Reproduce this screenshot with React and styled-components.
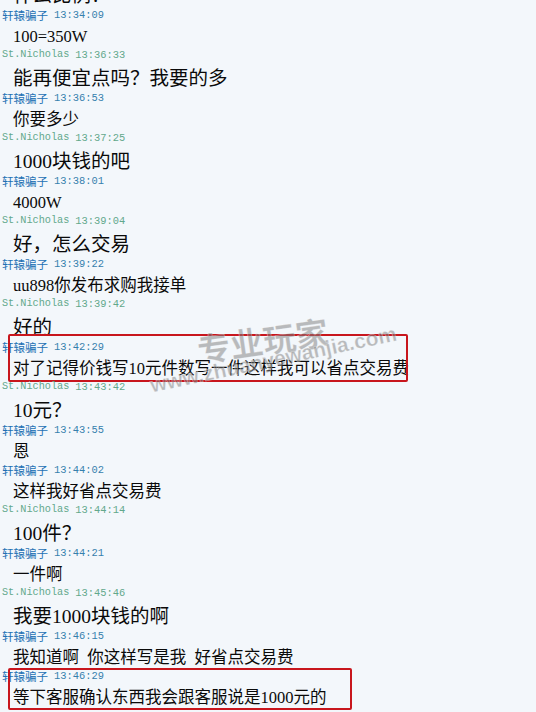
import React from "react"
import styled, { createGlobalStyle } from "styled-components"

const GlobalStyle = createGlobalStyle`
  html, body {
    margin: 0;
    padding: 0;
    background: #f3f7fb;
    overflow: hidden;
  }
`;

const Screen = styled.div`
  position: relative;
  width: 536px;
  height: 712px;
  overflow: hidden;
  background: #f3f7fb;
`;

const Log = styled.div`
  display: flex;
  flex-direction: column;
  margin-top: -36px;
`;

const Entry = styled.div`
  position: relative;
  display: flex;
  flex-direction: column;

  ${({ $box }) => $box && `
    &::after {
      content: "";
      position: absolute;
      left: 8px;
      top: ${$box.top}px;
      width: ${$box.width}px;
      height: ${$box.height}px;
      box-sizing: border-box;
      border: 2px solid #c8161d;
      border-radius: 2px;
      pointer-events: none;
    }
  `}
`;

const Header = styled.div`
  display: flex;
  align-items: center;
  gap: 6px;
  height: 16px;
  padding-left: 2px;
  white-space: nowrap;
`;

const Name = styled.span`
  font-family: ${({ $cjk }) => $cjk ? '"Noto Sans CJK SC", sans-serif' : '"Liberation Mono", monospace'};
  font-size: ${({ $cjk }) => $cjk ? "11.5px" : "10.2px"};
  line-height: 16px;
  color: ${({ $color }) => $color};
`;

const Time = styled.span`
  font-family: "Liberation Mono", monospace;
  font-size: 10.4px;
  line-height: 16px;
  color: ${({ $color }) => $color};
`;

const Body = styled.div`
  padding: 4px 0 0 13px;
  font-family: "Liberation Serif", "Noto Sans CJK SC", serif;
  font-size: ${({ $big }) => $big ? "19.5px" : "16.5px"};
  line-height: ${({ $big }) => $big ? "23px" : "20px"};
  color: #0a0a0a;
  white-space: pre;
`;

const Watermark = styled.div`
  position: absolute;
  left: ${({ $x }) => $x}px;
  top: ${({ $y }) => $y}px;
  transform: rotate(${({ $rot }) => $rot}deg);
  transform-origin: left top;
  font-family: ${({ $cjk }) => $cjk ? '"Noto Sans CJK SC", sans-serif' : '"Liberation Sans", sans-serif'};
  font-size: ${({ $size }) => $size}px;
  font-weight: 700;
  color: rgba(125, 125, 125, 0.5);
  -webkit-text-stroke: 0.6px rgba(255, 255, 255, 0.45);
  white-space: nowrap;
  pointer-events: none;
`;

const people = {
  xuan: { name: "轩辕骗子", cjk: true, nameColor: "#1f72b4", timeColor: "#3680ad", big: false },
  nick: { name: "St.Nicholas", cjk: false, nameColor: "#62a88b", timeColor: "#62a88b", big: true },
};

const messages = [
  { who: "nick", time: "13:33:51", text: "什么比例？" },
  { who: "xuan", time: "13:34:09", text: "100=350W" },
  { who: "nick", time: "13:36:33", text: "能再便宜点吗？我要的多" },
  { who: "xuan", time: "13:36:53", text: "你要多少" },
  { who: "nick", time: "13:37:25", text: "1000块钱的吧" },
  { who: "xuan", time: "13:38:01", text: "4000W" },
  { who: "nick", time: "13:39:04", text: "好，怎么交易" },
  { who: "xuan", time: "13:39:22", text: "uu898你发布求购我接单" },
  { who: "nick", time: "13:39:42", text: "好的" },
  { who: "xuan", time: "13:42:29", text: "对了记得价钱写10元件数写一件这样我可以省点交易费", box: { top: -5, width: 400, height: 48 } },
  { who: "nick", time: "13:43:42", text: "10元？" },
  { who: "xuan", time: "13:43:55", text: "恩" },
  { who: "xuan", time: "13:44:02", text: "这样我好省点交易费" },
  { who: "nick", time: "13:44:14", text: "100件？" },
  { who: "xuan", time: "13:44:21", text: "一件啊" },
  { who: "nick", time: "13:45:46", text: "我要1000块钱的啊" },
  { who: "xuan", time: "13:46:15", text: "我知道啊  你这样写是我  好省点交易费" },
  { who: "xuan", time: "13:46:29", text: "等下客服确认东西我会跟客服说是1000元的", box: { top: 0, width: 344, height: 42 } },
];

export default function App() {
  return (
    <Screen>
      <GlobalStyle />
      <Log>
        {messages.map((m, i) => {
          const p = people[m.who];
          return (
            <Entry key={i} $box={m.box}>
              <Header>
                <Name $cjk={p.cjk} $color={p.nameColor}>{p.name}</Name>
                <Time $color={p.timeColor}>{m.time}</Time>
              </Header>
              <Body $big={p.big}>{m.text}</Body>
            </Entry>
          );
        })}
      </Log>
      <Watermark $cjk $x={194} $y={325} $rot={-8} $size={33}>专业玩家</Watermark>
      <Watermark $x={148} $y={374} $rot={-12} $size={21}>www.zhuanyewanjia.com</Watermark>
    </Screen>
  )
}
